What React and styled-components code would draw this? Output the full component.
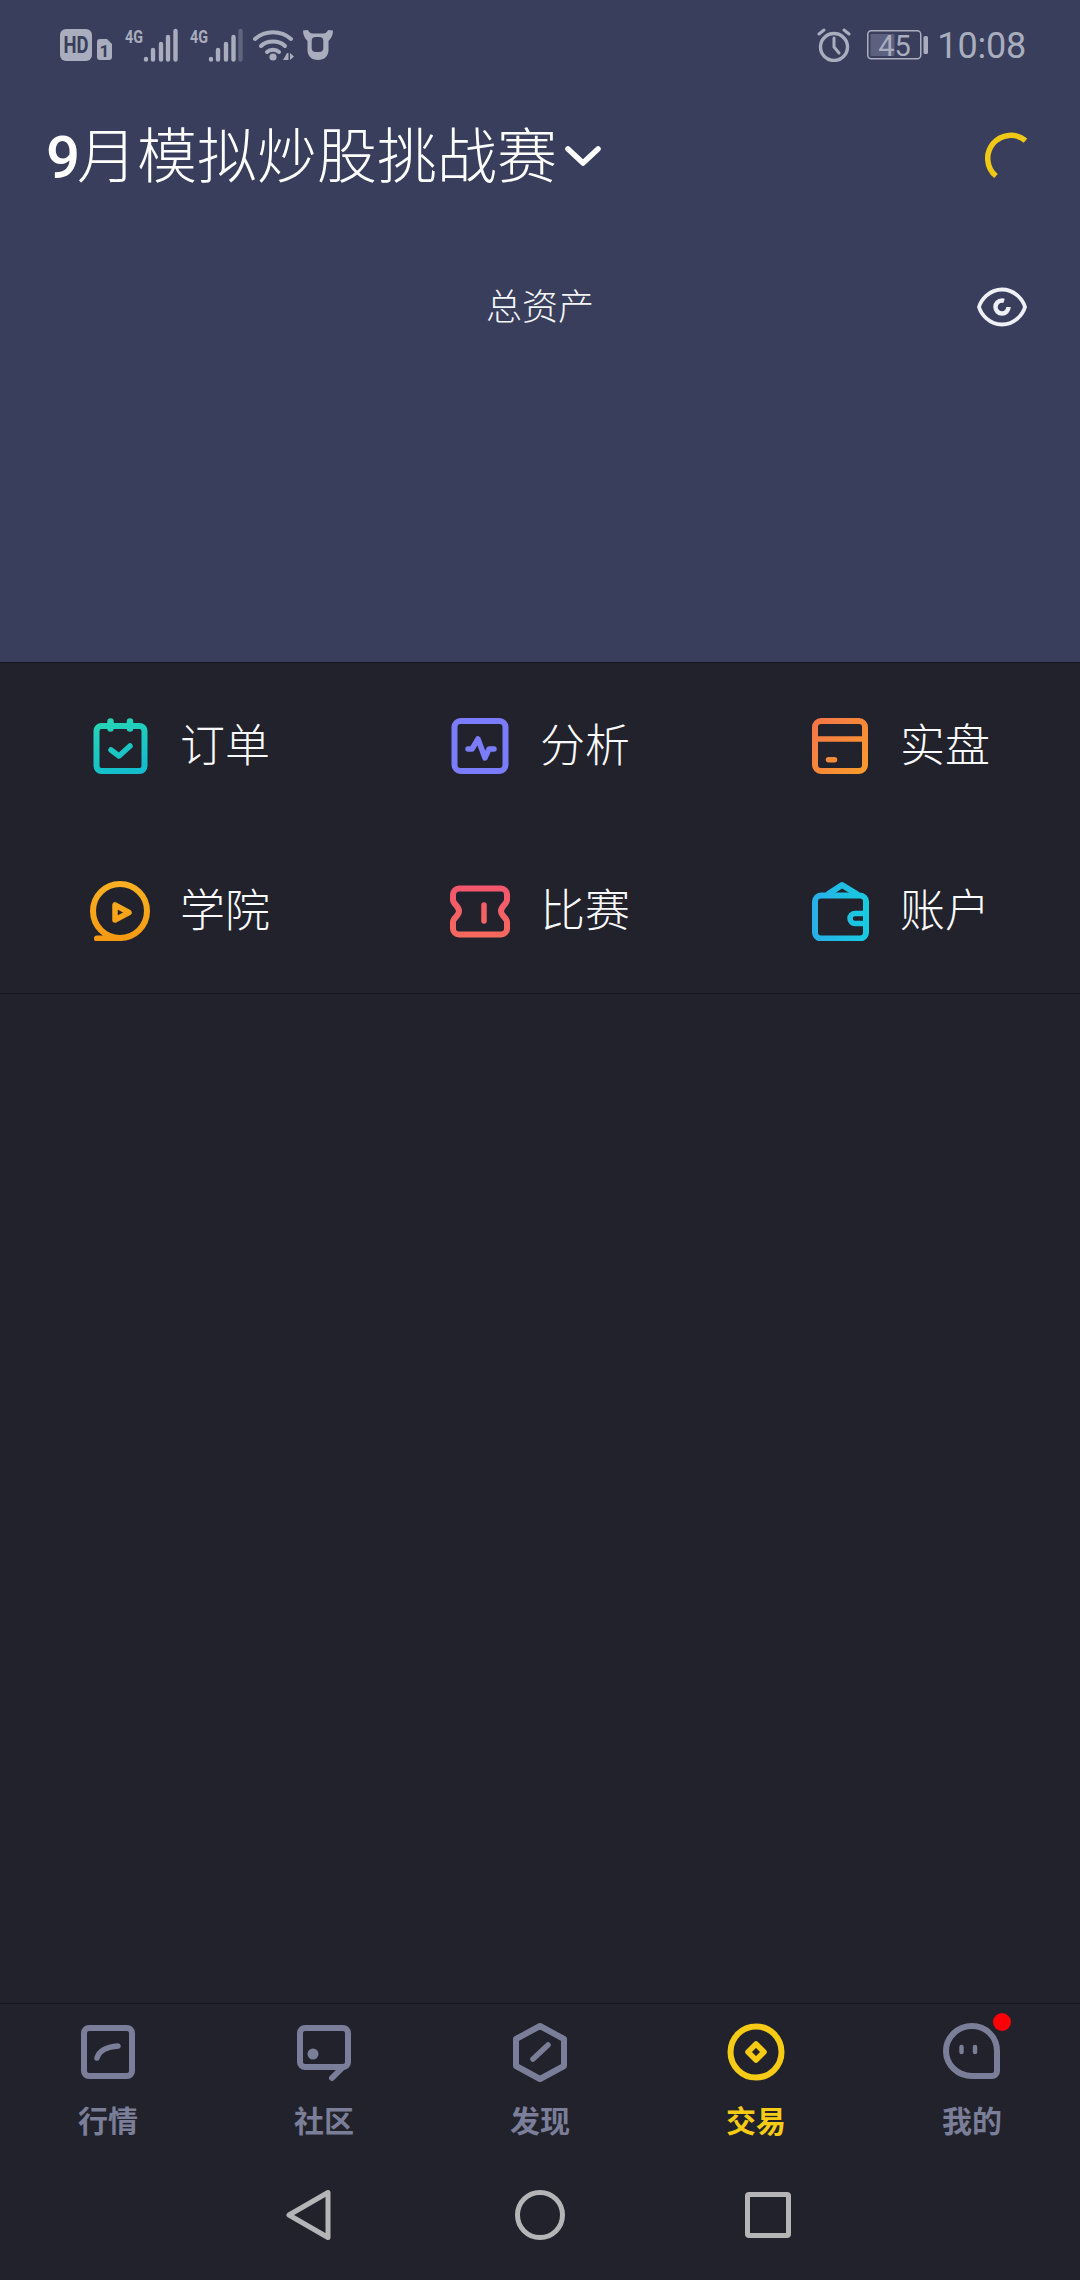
import React from "react";
import styled, { createGlobalStyle } from "styled-components";

const Global = createGlobalStyle`
  html, body { margin: 0; padding: 0; background: #21222b; }
  * { box-sizing: border-box; }
  body { font-family: "Noto Sans CJK SC", "Noto Sans", sans-serif; }
`;

const Page = styled.div`
  width: 1080px;
  height: 2280px;
  display: flex;
  flex-direction: column;
  background: #21222b;
  overflow: hidden;
`;

const Hero = styled.header`
  height: 663px;
  flex: none;
  background: #383e5b;
  border-bottom: 1px solid #15161c;
`;

const StatusBar = styled.div`
  height: 90px;
  padding: 28px 54px 0 60px;
  display: flex;
  justify-content: space-between;
  align-items: flex-start;
  color: #a9adbe;
`;

const StatusGroup = styled.div`
  display: flex;
  align-items: center;
  height: 34px;
`;

const Time = styled.span`
  font-family: Roboto, sans-serif;
  font-size: 36px;
  line-height: 44px;
  margin-left: 8px;
  padding-top: 2px;
  letter-spacing: -0.2px;
`;

const TitleRow = styled.div`
  height: 130px;
  padding: 0 52px 0 46px;
  display: flex;
  align-items: center;
  justify-content: space-between;
`;

const TitleBlock = styled.div`
  display: flex;
  align-items: center;
  color: #fff;
`;

const Title = styled.h1`
  margin: 0;
  font-size: 60px;
  font-weight: 300;
  line-height: 80px;
`;

const TitleDigit = styled.span`
  font-family: Roboto, sans-serif;
  font-weight: 500;
  font-size: 60px;
  margin-right: -3px;
`;

const TotalRow = styled.div`
  margin-top: 59px;
  height: 50px;
  padding-right: 53px;
  display: grid;
  grid-template-columns: 1fr auto 1fr;
  align-items: center;
  color: #f4f5f9;
`;

const TotalLabel = styled.span`
  grid-column: 2;
  font-size: 36px;
  font-weight: 300;
  line-height: 50px;
  margin-left: 53px;
`;

const EyeSlot = styled.span`
  grid-column: 3;
  justify-self: end;
  display: flex;
  margin-top: 6px;
`;

const Menu = styled.nav`
  flex: none;
  display: grid;
  grid-template-columns: repeat(3, 360px);
  grid-auto-rows: 165px;
  border-bottom: 1px solid #15161c;
`;

const MenuItem = styled.div`
  display: flex;
  align-items: center;
  gap: 30px;
  padding-left: 90px;
  color: #fafafc;
`;

const MenuLabel = styled.span`
  font-size: 45px;
  font-weight: 300;
  line-height: 60px;
  margin-top: -6px;
`;

const Spacer = styled.div`
  flex: 1;
`;

const TabBar = styled.nav`
  flex: none;
  display: grid;
  grid-template-columns: repeat(5, 216px);
  border-top: 1px solid #15161c;
`;

const Tab = styled.div`
  padding: 18px 0 10px;
  display: flex;
  flex-direction: column;
  align-items: center;
  gap: 17px;
  color: ${(p) => (p.$active ? "#f5cb16" : "#7b7e98")};
`;

const TabIconWrap = styled.span`
  position: relative;
  display: flex;
`;

const TabLabel = styled.span`
  font-size: 30px;
  font-weight: 700;
  line-height: 41px;
`;

const Badge = styled.span`
  position: absolute;
  top: -9px;
  right: -9px;
  width: 18px;
  height: 18px;
  border-radius: 50%;
  background: #fb0007;
`;

const SystemBar = styled.div`
  flex: none;
  height: 130px;
  padding-right: 4px;
  display: flex;
  justify-content: center;
  align-items: center;
  color: #b5b5b8;
`;

const SysKey = styled.span`
  display: flex;
  margin-right: ${(p) => p.$after || 0}px;
`;

const Grad = ({ id, a, b, x2 = 60, y2 = 60 }) => (
  <defs>
    <linearGradient id={id} gradientUnits="userSpaceOnUse" x1="0" y1="0" x2={x2} y2={y2}>
      <stop offset="0" stopColor={a} />
      <stop offset="1" stopColor={b} />
    </linearGradient>
  </defs>
);

const Icon60 = ({ children, stroke = "currentColor", sw = 6 }) => (
  <svg width="60" height="60" viewBox="0 0 60 60" fill="none" stroke={stroke} strokeWidth={sw} strokeLinecap="round" strokeLinejoin="round">
    {children}
  </svg>
);

const OrderIcon = () => (
  <Icon60 stroke="url(#gOrder)">
    <Grad id="gOrder" a="#2ad8b2" b="#14bdcc" x2={20} />
    <rect x="6.500" y="10" width="48" height="45" rx="5" />
    <path d="M20.500 5.500v7M40 5.500v7" strokeWidth="6.500" />
    <path d="M21 34l8 6 11-10" strokeWidth="5.500" />
  </Icon60>
);

const AnalysisIcon = () => (
  <Icon60 stroke="#7a7cfb">
    <rect x="4.500" y="5" width="51" height="50" rx="6" />
    <path d="M18 33h4l6-10 7 19 4-9h5" strokeWidth="5.500" />
  </Icon60>
);

const RealIcon = () => (
  <Icon60 stroke="url(#gReal)">
    <Grad id="gReal" a="#f4734a" b="#f99d2a" />
    <rect x="5" y="5" width="50" height="50" rx="6" />
    <path d="M6 23h48" strokeWidth="5.500" />
    <path d="M18.500 43.700h6" strokeWidth="5.500" />
  </Icon60>
);

const AcademyIcon = () => (
  <Icon60 stroke="url(#gAcademy)">
    <Grad id="gAcademy" a="#fbb022" b="#f59a12" x2={0} />
    <circle cx="30" cy="30" r="27" />
    <path d="M7 57.500h23" />
    <path d="M25 24v15l14-7.500z" strokeWidth="5.500" />
  </Icon60>
);

const MatchIcon = () => (
  <Icon60 stroke="url(#gMatch)">
    <Grad id="gMatch" a="#f2556e" b="#f76b5c" x2={0} />
    <path d="M9 7.500h42a6 6 0 0 1 6 6v5.500c0 4-6 6-6 11s6 7 6 11v6.500a6 6 0 0 1-6 6H9a6 6 0 0 1-6-6V41c0-4 6-6 6-11s-6-7-6-11v-5.500a6 6 0 0 1 6-6z" />
    <path d="M34 24v16" strokeWidth="5.500" />
  </Icon60>
);

const WalletIcon = () => (
  <Icon60 stroke="url(#gWallet)">
    <Grad id="gWallet" a="#28aee8" b="#18cce0" y2={0} />
    <rect x="5" y="14.500" width="51" height="43" rx="6" />
    <path d="M19 12.500l13-8.500 14 8.500" />
    <path d="M56 32.500H45a5 5 0 0 0 0 10h11" strokeWidth="5.500" />
  </Icon60>
);

const menuItems = [
  ["订单", OrderIcon],
  ["分析", AnalysisIcon],
  ["实盘", RealIcon],
  ["学院", AcademyIcon],
  ["比赛", MatchIcon],
  ["账户", WalletIcon],
];

const MarketIcon = () => (
  <Icon60>
    <rect x="6" y="6" width="48" height="48" rx="5" />
    <path d="M19 36c2-7 8-11 21-12" strokeWidth="5.500" />
  </Icon60>
);

const CommunityIcon = () => (
  <Icon60>
    <path d="M11 6h38a5 5 0 0 1 5 5v29a5 5 0 0 1-5 5H11a5 5 0 0 1-5-5V11a5 5 0 0 1 5-5z" />
    <path d="M48 46l-10 10" />
    <circle cx="19" cy="32" r="5.500" fill="currentColor" stroke="none" />
  </Icon60>
);

const DiscoverIcon = () => (
  <Icon60>
    <path d="M30 4l24 13v27L30 57 6 44V17z" />
    <path d="M23 37l15-14" strokeWidth="5.500" />
  </Icon60>
);

const TradeIcon = () => (
  <Icon60>
    <circle cx="30" cy="30" r="25.500" />
    <path d="M30 22l8 8-8 8-8-8z" strokeWidth="5.500" />
  </Icon60>
);

const MineIcon = () => (
  <Icon60>
    <path d="M30 4c14 0 25 11 25 25v20a5 5 0 0 1-5 5H30C16 54 4 43 4 29S16 4 30 4z" />
    <path d="M19.500 25v5M33 25v5" strokeWidth="4.500" />
  </Icon60>
);

const tabs = [
  ["行情", MarketIcon],
  ["社区", CommunityIcon],
  ["发现", DiscoverIcon],
  ["交易", TradeIcon, true],
  ["我的", MineIcon, false, true],
];

const StatusSvg = () => (
  <svg width="283" height="46" viewBox="0 -6 283 46" fill="currentColor" style={{ display: "block" }}>
    <rect x="0" y="1" width="32" height="32" rx="6" />
    <text x="16" y="25" textAnchor="middle" fontFamily="Roboto, sans-serif" fontWeight="700" fontSize="23" fill="#383e5b" textLength="25" lengthAdjust="spacingAndGlyphs">HD</text>
    <path d="M37 14a3 3 0 0 1 3-3h7l5 5v13a3 3 0 0 1-3 3H40a3 3 0 0 1-3-3z" />
    <text x="44.500" y="29" textAnchor="middle" fontFamily="Roboto, sans-serif" fontWeight="700" fontSize="17" fill="#383e5b">1</text>
    <text x="65" y="15" fontFamily="Roboto, sans-serif" fontWeight="700" fontSize="19" textLength="18" lengthAdjust="spacingAndGlyphs">4G</text>
    <g stroke="currentColor" strokeWidth="4.400" strokeLinecap="round">
      <path d="M86 31v.5M93 22v9.500M101 16v15.500M108 9v22.500M115.500 3v28.500" />
    </g>
    <text x="130" y="15" fontFamily="Roboto, sans-serif" fontWeight="700" fontSize="19" textLength="18" lengthAdjust="spacingAndGlyphs">4G</text>
    <g stroke="currentColor" strokeWidth="4.400" strokeLinecap="round">
      <path d="M151 31v.5M158 22v9.500M166 16v15.500M173.500 9v22.500" />
      <path d="M180.500 3v28.500" opacity="0.35" />
    </g>
    <g fill="none" stroke="currentColor" strokeWidth="4" strokeLinecap="round">
      <path d="M195 11c10-9 26-9 36 0" />
      <path d="M201 18c6-6 18-6 24 0" />
      <path d="M207 24c3-3 9-3 12 0" />
    </g>
    <circle cx="213" cy="29" r="3.600" />
    <path d="M223 32l4-7h1.500v7zM230 25v7l4-3.500z" />
    <path
      fillRule="evenodd"
      d="M243 2.500l5-.5c1 2 2 3.500 5 3.500h10c3 0 4-1.500 5-3.500l5 .5c0 4-1.500 8-4.500 10.500v9c0 6-4 10-10.500 10s-10.500-4-10.500-10v-9C244.500 10.500 243 6.500 243 2.500zM251.700 13v7a4 4 0 0 0 4 4h3.600a4 4 0 0 0 4-4v-7a4 4 0 0 0-4-4h-3.600a4 4 0 0 0-4 4z"
    />
  </svg>
);

const AlarmIcon = () => (
  <svg width="34" height="34" viewBox="0 0 34 34" fill="none" stroke="currentColor" strokeLinecap="round">
    <circle cx="17" cy="19" r="13.500" strokeWidth="3.400" />
    <path d="M17 10v9l5 6" strokeWidth="3" />
    <path d="M2 6l5-4M32 6l-5-4" strokeWidth="3" />
  </svg>
);

const BatteryIcon = () => (
  <svg width="62" height="38" viewBox="0 -4 62 38" style={{ display: "block", marginLeft: 16 }}>
    <rect x="0.750" y="0.750" width="53" height="28" rx="3.500" fill="none" stroke="currentColor" strokeWidth="1.500" />
    <rect x="3.500" y="4" width="24" height="22" rx="1" fill="#5c6180" />
    <rect x="56.500" y="6" width="4.500" height="18" rx="1.500" fill="currentColor" />
    <text x="27.500" y="25.500" textAnchor="middle" fontFamily="Roboto, sans-serif" fontSize="29" fill="currentColor">45</text>
  </svg>
);

const Chevron = () => (
  <svg width="36" height="20" viewBox="0 0 36 20" fill="none" stroke="#fff" strokeWidth="5.500" strokeLinecap="round" strokeLinejoin="round" style={{ marginLeft: 8, marginTop: 2 }}>
    <path d="M3 3l15 14L33 3" />
  </svg>
);

const Spinner = () => (
  <svg width="48" height="52" viewBox="0 0 48 52" fill="none" stroke="#f0c917" strokeWidth="5.500">
    <path d="M45.500 11.700A23 23 0 1 0 16 47" />
  </svg>
);

const Eye = () => (
  <svg width="50" height="40" viewBox="0 0 50 40" fill="none" stroke="#eef0f5">
    <path d="M25 2.500C38 2.500 46 13 48 20 46 27 38 37.500 25 37.500S4 27 2 20C4 13 12 2.500 25 2.500z" strokeWidth="3.800" />
    <circle cx="25" cy="20" r="6.500" strokeWidth="4.500" strokeDasharray="32 9" />
  </svg>
);

export default function App() {
  return (
    <Page>
      <Global />
      <Hero>
        <StatusBar>
          <StatusGroup>
            <StatusSvg />
          </StatusGroup>
          <StatusGroup>
            <AlarmIcon />
            <BatteryIcon />
            <Time>10:08</Time>
          </StatusGroup>
        </StatusBar>
        <TitleRow>
          <TitleBlock>
            <Title>
              <TitleDigit>9</TitleDigit>月模拟炒股挑战赛
            </Title>
            <Chevron />
          </TitleBlock>
          <Spinner />
        </TitleRow>
        <TotalRow>
          <TotalLabel>总资产</TotalLabel>
          <EyeSlot>
            <Eye />
          </EyeSlot>
        </TotalRow>
      </Hero>
      <Menu>
        {menuItems.map(([label, Ico]) => (
          <MenuItem key={label}>
            <Ico />
            <MenuLabel>{label}</MenuLabel>
          </MenuItem>
        ))}
      </Menu>
      <Spacer />
      <TabBar>
        {tabs.map(([label, Ico, active, badge]) => (
          <Tab key={label} $active={active}>
            <TabIconWrap>
              <Ico />
              {badge && <Badge />}
            </TabIconWrap>
            <TabLabel>{label}</TabLabel>
          </Tab>
        ))}
      </TabBar>
      <SystemBar>
        <SysKey $after={184}>
          <svg width="46" height="52" viewBox="0 0 46 52" fill="none" stroke="currentColor" strokeWidth="5" strokeLinejoin="round">
            <path d="M43 3.500v45L4 26z" />
          </svg>
        </SysKey>
        <SysKey $after={180}>
          <svg width="50" height="52" viewBox="0 0 50 52" fill="none" stroke="currentColor" strokeWidth="5">
            <circle cx="25" cy="26" r="22.500" />
          </svg>
        </SysKey>
        <SysKey>
          <svg width="46" height="46" viewBox="0 0 46 46" fill="none" stroke="currentColor" strokeWidth="5" strokeLinejoin="round">
            <rect x="2.500" y="2.500" width="41" height="41" rx="1.500" />
          </svg>
        </SysKey>
      </SystemBar>
    </Page>
  );
}
